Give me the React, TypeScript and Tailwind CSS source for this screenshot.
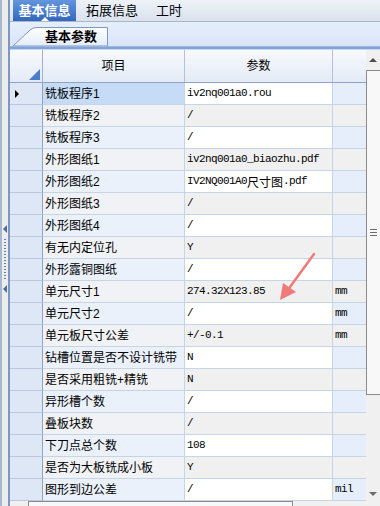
import React from 'react';

// 参数行: 项目, 参数, 单位
const rows: [string, string, string][] = [
    ['铣板程序1', 'iv2nq001a0.rou', ''],
    ['铣板程序2', '/', ''],
    ['铣板程序3', '/', ''],
    ['外形图纸1', 'iv2nq001a0_biaozhu.pdf', ''],
    ['外形图纸2', 'IV2NQ001A0尺寸图.pdf', ''],
    ['外形图纸3', '/', ''],
    ['外形图纸4', '/', ''],
    ['有无内定位孔', 'Y', ''],
    ['外形露铜图纸', '/', ''],
    ['单元尺寸1', '274.32X123.85', 'mm'],
    ['单元尺寸2', '/', 'mm'],
    ['单元板尺寸公差', '+/-0.1', 'mm'],
    ['钻槽位置是否不设计铣带', 'N', ''],
    ['是否采用粗铣+精铣', 'N', ''],
    ['异形槽个数', '/', ''],
    ['叠板块数', '/', ''],
    ['下刀点总个数', '108', ''],
    ['是否为大板铣成小板', 'Y', ''],
    ['图形到边公差', '/', 'mil'],
];

// 中文部分用正常字号
const renderValue = (v: string) =>
    v.split(/([\u4e00-\u9fff]+)/).map((part, i) =>
        /[\u4e00-\u9fff]/.test(part) ? (
            <span key={i} className="text-[12px] tracking-normal font-['Noto_Sans_CJK_SC',sans-serif]">
                {part}
            </span>
        ) : (
            <span key={i}>{part}</span>
        )
    );

export default function App() {
    return (
        <div className="relative w-[380px] h-[506px] overflow-hidden flex bg-white text-black font-['Liberation_Sans','Noto_Sans_CJK_SC',sans-serif]">
            {/* 左侧分隔条 */}
            <div className="w-[10px] h-full flex flex-col items-center border-l-2 border-l-[#a9b8cf] border-r-2 border-r-[#7e97c0] bg-[#ececec]">
                <div className="h-[225px]" />
                <div className="w-0 h-0 border-y-[4px] border-y-transparent border-r-[4px] border-r-[#4a6fa8]" />
                <div className="mt-[6px] h-[42px] w-[2px] bg-[repeating-linear-gradient(to_bottom,#5f7fb3_0px,#5f7fb3_1px,transparent_1px,transparent_3px)]" />
                <div className="mt-[4px] w-0 h-0 border-y-[4px] border-y-transparent border-r-[4px] border-r-[#4a6fa8]" />
            </div>

            <div className="flex-1 flex flex-col min-w-0">
                {/* 顶部标签 */}
                <div className="h-[22px] flex items-stretch pl-[3px] bg-gradient-to-b from-[#eef2f8] to-[#dae2ee] border-b border-[#a8b6cc] text-[13px]">
                    <div className="relative w-[63px] flex items-center justify-center bg-gradient-to-b from-[#6396dc] to-[#3467bd] text-white font-bold">
                        基本信息
                        <div className="absolute bottom-0 left-[28px] w-0 h-0 border-x-[4px] border-x-transparent border-b-[4px] border-b-white" />
                    </div>
                    <div className="w-[72px] flex items-center justify-center">拓展信息</div>
                    <div className="w-[42px] flex items-center justify-center">工时</div>
                </div>

                {/* 子标签 */}
                <div className="h-[24px] flex items-end pl-[3px] bg-gradient-to-b from-[#e6eefb] to-[#d9e5f8]">
                    <div className="relative w-[95px] h-[19px] flex items-center pl-[32px] text-[13px] font-bold">
                        <svg className="absolute inset-0" width="95" height="19" viewBox="0 0 95 19">
                            <defs>
                                <linearGradient id="tabg" x1="0" y1="0" x2="0" y2="1">
                                    <stop offset="0" stopColor="#ffffff" />
                                    <stop offset="1" stopColor="#e3ecf9" />
                                </linearGradient>
                            </defs>
                            <path d="M0 19 L17 3 Q20 0.5 24 0.5 L94.5 0.5 L94.5 19 Z" fill="url(#tabg)" stroke="#7f98c0" strokeWidth="1" />
                        </svg>
                        <span className="relative">基本参数</span>
                    </div>
                </div>
                <div className="h-[1px] bg-[#9fb5d8]" />
                <div className="h-[2px] bg-[#7fa4dc]" />
                <div className="h-[1px] bg-[#c9d8ee]" />

                {/* 表格 */}
                <div className="flex-1 flex min-h-0">
                    <div className="w-[356px] flex flex-col">
                        <div className="h-[33px] flex text-[12px] bg-gradient-to-b from-[#f7f9fd] to-[#e4ebf6] border-b border-[#8fa4c4]">
                            <div className="relative w-[33px] border-r border-[#9fb1cc]">
                                <svg className="absolute right-[2px] bottom-[2px]" width="11" height="11" viewBox="0 0 11 11">
                                    <path d="M11 0 L11 11 L0 11 Z" fill="#4b7cc9" />
                                </svg>
                            </div>
                            <div className="w-[142px] flex items-center justify-center border-r border-[#b3c2d8]">项目</div>
                            <div className="w-[148px] flex items-center justify-center border-r border-[#b3c2d8]">参数</div>
                            <div className="w-[33px]" />
                        </div>

                        {rows.map(([label, value, unit], i) => {
                            const odd = i % 2 === 0;
                            const labelBg = i === 0 ? 'bg-[#c5dbf6]' : odd ? 'bg-[#eaf1fb]' : 'bg-[#f0f2f5]';
                            const valueBg = odd ? 'bg-white' : 'bg-[#f0f0f0]';
                            const unitBg = odd ? 'bg-[#e5eefa]' : 'bg-[#f0f0f0]';
                            return (
                                <div key={label} className="h-[22px] flex">
                                    <div className="w-[33px] flex items-center pl-[5px] bg-[#dde7f5] border-r border-r-[#8fa4c4] border-b border-b-[#b9c8de]">
                                        {i === 0 && (
                                            <div className="w-0 h-0 border-y-[4px] border-y-transparent border-l-[4px] border-l-black" />
                                        )}
                                    </div>
                                    <div className={`w-[142px] flex items-center pl-[2px] text-[12px] whitespace-nowrap border-r border-b border-[#c6d4e8] ${labelBg}`}>
                                        {label}
                                    </div>
                                    <div className={`w-[148px] flex items-center pl-[2px] text-[11px] tracking-[-0.6px] whitespace-nowrap font-['Liberation_Mono','Noto_Sans_CJK_SC',monospace] border-r border-b border-[#c6d4e8] ${valueBg}`}>
                                        {renderValue(value)}
                                    </div>
                                    <div className={`w-[33px] flex items-center pl-[2px] text-[11px] tracking-[-0.6px] font-['Liberation_Mono',monospace] border-b border-[#c6d4e8] ${unitBg}`}>
                                        {unit}
                                    </div>
                                </div>
                            );
                        })}
                    </div>

                    {/* 竖向滚动条 */}
                    <div className="w-[14px] flex flex-col bg-[#f0f0f0]">
                        <div className="h-[20px] flex items-center justify-center">
                            <div className="w-0 h-0 border-x-[4px] border-x-transparent border-b-[4px] border-b-[#4d4d4d]" />
                        </div>
                        <div className="h-[325px] flex items-center justify-center bg-[#f8f8f8] border-l border-t border-b border-[#8c8c8c]">
                            <div className="flex flex-col gap-[2px]">
                                <div className="w-[7px] h-[1px] bg-[#6d6d6d]" />
                                <div className="w-[7px] h-[1px] bg-[#6d6d6d]" />
                                <div className="w-[7px] h-[1px] bg-[#6d6d6d]" />
                            </div>
                        </div>
                        <div className="flex-1" />
                        <div className="h-[14px] flex items-center justify-center">
                            <div className="w-0 h-0 border-x-[4px] border-x-transparent border-t-[4px] border-t-[#6d6d6d]" />
                        </div>
                    </div>
                </div>

                {/* 横向滚动条 */}
                <div className="h-[5px] flex bg-[#f0f0f0]">
                    <div className="w-[18px]" />
                    <div className="w-[265px] border-t border-l border-r border-[#8c8c8c] bg-[#f8f8f8]" />
                </div>
            </div>

            {/* 红色箭头标注 */}
            <svg className="absolute inset-0 pointer-events-none" width="380" height="506" viewBox="0 0 380 506">
                <line x1="314" y1="254" x2="290" y2="287" stroke="#f07a7a" strokeWidth="2.5" strokeLinecap="round" />
                <path d="M280 300 L283 283 L296 292 Z" fill="#f07a7a" />
            </svg>
        </div>
    );
}
